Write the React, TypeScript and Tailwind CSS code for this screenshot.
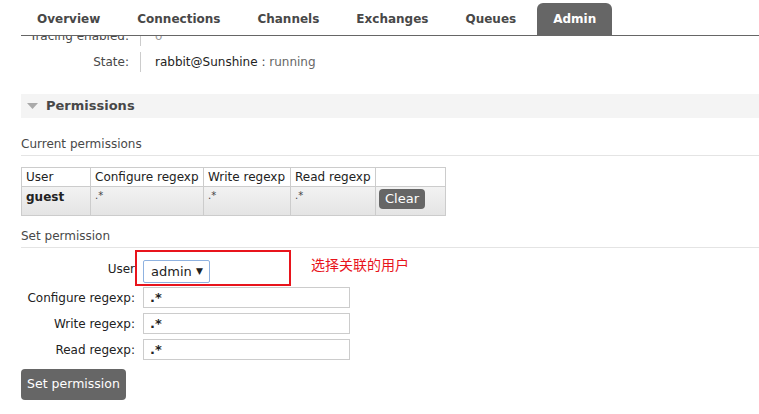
const tabs = ["Overview", "Connections", "Channels", "Exchanges", "Queues", "Admin"];

const Tabs = () => (
  <div className="ml-[21px] flex h-[36px] items-end border-b border-[#666]">
    {tabs.map((t) => (
      <div
        key={t}
        className={
          t === "Admin"
            ? "mr-[5px] flex h-[32px] items-center rounded-t-[6px] bg-[#666] px-4 text-[12px] font-bold text-white"
            : "mr-[5px] flex h-[32px] items-center px-4 text-[12px] font-bold text-[#484848]"
        }
      >
        {t}
      </div>
    ))}
  </div>
);

const Row = ({ label, children }: { label: string; children: React.ReactNode }) => (
  <div className="flex">
    <div className="w-[120px] border-r border-[#ccc] pr-[11px] text-right">{label}</div>
    <div className="pl-[14px]">{children}</div>
  </div>
);

const FormRow = ({ label, value }: { label: string; value: string }) => (
  <div className="flex items-center">
    <div className="w-[122px] whitespace-nowrap pr-[8px] text-right">{label}</div>
    <div className="flex h-[21px] w-[207px] items-center border border-[#ccc] bg-white pl-[6px] text-[13px] font-bold text-[#222]">
      {value}
    </div>
  </div>
);

export default function App() {
  return (
    <div className="h-[414px] w-[759px] overflow-hidden bg-white text-[12px] text-[#484848]" style={{ fontFamily: '"DejaVu Sans", Verdana, sans-serif' }}>
      <Tabs />
      <div className="pl-[21px]">
        <div className="h-[47px] overflow-hidden">
          <div className="-mt-[10px] flex flex-col gap-[6px] leading-[20px]">
            <Row label="Tracing enabled:">
              <span className="text-[#999]">o</span>
            </Row>
            <Row label="State:">
              <span className="text-[#222]">rabbit@Sunshine</span> : <span className="text-[#666]">running</span>
            </Row>
          </div>
        </div>

        <div className="mt-[11px] flex h-[24px] items-center bg-[#f4f4f4] pl-[6px]">
          <svg width="11" height="7" viewBox="0 0 11 7">
            <path d="M0 0 L11 0 L5.5 6 Z" fill="#aaa" />
          </svg>
          <span className="ml-[8px] text-[13px] font-bold text-[#484848]">Permissions</span>
        </div>

        <div className="mt-[18px] border-b border-[#e4e4e4] pb-[3px] leading-[16px]">Current permissions</div>

        <table className="mt-[11px] border-collapse leading-[16px]">
          <thead>
            <tr>
              <th className="w-[69px] border border-[#ccc] px-[4px] py-[1px] text-left font-normal text-[#222]">User</th>
              <th className="w-[113px] border border-[#ccc] px-[4px] py-[1px] text-left font-normal text-[#222]">Configure regexp</th>
              <th className="w-[87px] border border-[#ccc] px-[4px] py-[1px] text-left font-normal text-[#222]">Write regexp</th>
              <th className="w-[85px] border border-[#ccc] px-[4px] py-[1px] text-left font-normal text-[#222]">Read regexp</th>
              <th className="w-[70px] border border-[#ccc]"></th>
            </tr>
          </thead>
          <tbody>
            <tr className="h-[29px] bg-gradient-to-b from-[#f2f2f2] to-[#e4e4e4] align-top">
              <td className="border border-[#ccc] px-[4px] pt-[2px] font-bold text-[#222]">guest</td>
              <td className="border border-[#ccc] px-[4px] pt-[1px] text-[10px] text-[#444]">.*</td>
              <td className="border border-[#ccc] px-[4px] pt-[1px] text-[10px] text-[#444]">.*</td>
              <td className="border border-[#ccc] px-[4px] pt-[1px] text-[10px] text-[#444]">.*</td>
              <td className="border border-[#ccc] px-[3px] pt-[2px]">
                <div className="flex h-[20px] w-[46px] items-center justify-center rounded-[4px] bg-[#666] text-[13px] text-white">
                  Clear
                </div>
              </td>
            </tr>
          </tbody>
        </table>

        <div className="mt-[12px] border-b border-[#e4e4e4] pb-[3px] leading-[16px]">Set permission</div>

        <div className="mt-[2px] flex items-start text-[#222]">
          <div className="mt-[10px] w-[114px] text-right">User</div>
          <div className="flex h-[36px] w-[156px] items-start border-2 border-[#e8141c] pl-[6px] pt-[8px]">
            <div className="flex h-[23px] w-[67px] items-center justify-between rounded-[2px] border border-[#8fb2e0] bg-white pl-[7px] pr-[6px] text-[13px] text-[#222]">
              <span>admin</span>
              <span className="text-[9px]">▼</span>
            </div>
          </div>
          <div className="ml-[20px] mt-[4px] text-[14px] text-[#e8141c]" style={{ fontFamily: '"Noto Sans CJK SC", sans-serif' }}>
            选择关联的用户
          </div>
        </div>

        <div className="mt-[1px] flex flex-col gap-[5px] text-[#222]">
          <FormRow label="Configure regexp:" value=".*" />
          <FormRow label="Write regexp:" value=".*" />
          <FormRow label="Read regexp:" value=".*" />
        </div>

        <div className="mt-[9px] flex h-[31px] w-[105px] items-center justify-center rounded-[4px] bg-[#666] text-[12.5px] text-white">
          Set permission
        </div>
      </div>
    </div>
  );
}
